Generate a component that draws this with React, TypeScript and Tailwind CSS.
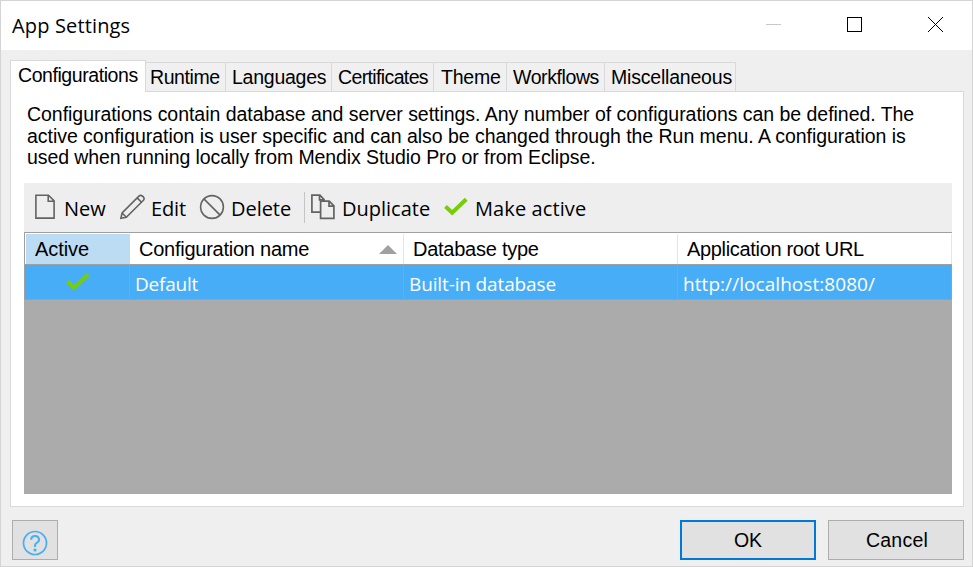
const ui = "font-['Open_Sans','Noto_Sans',sans-serif]";
const classic = "font-['Liberation_Sans',Arial,sans-serif]";

const tabs = [
  { label: "Runtime", cls: "w-[80px] pl-1 tracking-[-0.42px]" },
  { label: "Languages", cls: "w-[106px] pl-[6px] tracking-[-0.25px]" },
  { label: "Certificates", cls: "w-[102px] pl-[6px] tracking-[-0.63px]" },
  { label: "Theme", cls: "w-[73px] pl-[7px] tracking-[-0.2px]" },
  { label: "Workflows", cls: "w-[98px] pl-[6px] tracking-[-0.4px]" },
  { label: "Miscellaneous", cls: "w-[131px] pl-[6px] tracking-[-0.2px]" },
];

function Check() {
  return (
    <svg width="24" height="20" viewBox="0 0 24 20" fill="none">
      <path d="M1.5 9.5 8.2 15.8 22.2 2.2" stroke="#76ce06" strokeWidth="4" />
    </svg>
  );
}

function NewIcon() {
  return (
    <svg width="20" height="26" viewBox="0 0 20 26" fill="none" stroke="#636363" strokeWidth="1.6">
      <path d="M.9 1.3h12.6l5.6 5.6v17.2H.9zM13.2 1.3v5.9h5.9" />
    </svg>
  );
}

function EditIcon() {
  return (
    <svg width="26" height="26" viewBox="0 0 26 26" fill="none" stroke="#636363" strokeWidth="1.6">
      <path d="M.9 24.3 2.1 19 18.9 2.1Q20.7.5 22.5 2.1L23.3 2.9Q24.9 4.7 23.2 6.5L6.3 23.2zM2.1 19 6.3 23.2M17.2 3.9l4.3 4.3" />
    </svg>
  );
}

function DeleteIcon() {
  return (
    <svg width="26" height="26" viewBox="0 0 26 26" fill="none" stroke="#636363" strokeWidth="1.6">
      <circle cx="13" cy="13" r="11.4" />
      <path d="m4.9 4.9 16.2 16.2" />
    </svg>
  );
}

function DuplicateIcon() {
  return (
    <svg width="24" height="26" viewBox="0 0 24 26" fill="none" stroke="#636363" strokeWidth="1.7">
      <path d="M9.5 18.2H.9V1.2h8l4.2 4.4v1.3M8.5 1.2v4.7h4.6" />
      <path d="M9.6 7.2h8.6l4.7 4.7v12.5H9.6zM18 7.2v4.9h4.9" />
    </svg>
  );
}

function HelpIcon() {
  return (
    <svg width="26" height="26" viewBox="0 0 26 26" fill="none" stroke="#48adf7" strokeWidth="1.7">
      <circle cx="13" cy="13" r="11.5" />
      <path d="M9.2 9.7a3.9 3.6 0 1 1 5.6 3.1Q13 13.7 13 15.2V17" strokeWidth="2" />
      <circle cx="13" cy="20" r="1.6" fill="#48adf7" stroke="none" />
    </svg>
  );
}

function TitleBar() {
  return (
    <header className="flex h-[49px] shrink-0 items-start bg-white">
      <h1 className={`${ui} ml-[11px] mt-[11px] flex-1 text-[20px] leading-[28px] tracking-[0.15px]`}>App Settings</h1>
      <svg className="mt-[15px] mr-[27px]" width="180" height="17" viewBox="0 0 180 17" fill="none" shapeRendering="crispEdges">
        <path d="M1 8.5h15" stroke="#c8c8c8" />
        <path d="M82.5 1.5h14v14h-14z" stroke="#000" />
        <path d="m163 1 15 15M178 1l-15 15" stroke="#000" strokeWidth="1" shapeRendering="auto" />
      </svg>
    </header>
  );
}

function TabStrip() {
  return (
    <div className={`${classic} flex h-[31px] items-end text-[19.5px]`}>
      <div className="z-10 -mb-px h-[32px] w-[136px] shrink-0 border border-b-0 border-[#d9d9d9] bg-white pl-[7px] pt-[3px] leading-[22px] tracking-[-0.43px]">
        Configurations
      </div>
      {tabs.map((t) => (
        <div key={t.label} className={`${t.cls} h-[29px] shrink-0 border-r border-t border-[#d9d9d9] bg-[#f0f0f0] pt-[3px] leading-[22px]`}>
          {t.label}
        </div>
      ))}
    </div>
  );
}

function Toolbar() {
  return (
    <div className={`${ui} flex h-[49px] items-start bg-[#eee] text-[20px] leading-[28px]`}>
      <div className="flex w-[96px] pl-[11px] pt-[11px]">
        <NewIcon />
        <span className="ml-[9px] mt-px">New</span>
      </div>
      <div className="flex w-[79px] pt-[11px]">
        <EditIcon />
        <span className="ml-[5px] mt-px tracking-[-0.13px]">Edit</span>
      </div>
      <div className="flex w-[105px] pt-[11px]">
        <DeleteIcon />
        <span className="ml-[6px] mt-px tracking-[-0.05px]">Delete</span>
      </div>
      <div className="mt-[9px] h-[31px] w-px bg-[#c4c4c4]" />
      <div className="flex w-[139px] pl-[6px] pt-[11px]">
        <DuplicateIcon />
        <span className="ml-[7px] mt-px">Duplicate</span>
      </div>
      <div className="flex pt-[11px]">
        <div className="pt-[3px]"><Check /></div>
        <span className="ml-[7px] mt-px tracking-[0.1px]">Make active</span>
      </div>
    </div>
  );
}

function Grid() {
  return (
    <div className="flex h-[262px] flex-col border-t border-[#a0a0a0] bg-[#ababab]">
      <div className={`${classic} flex h-[32px] border-b border-l border-[#a0a0a0] bg-white pt-px text-[20px] leading-[30px]`}>
        <div className="ml-px w-[104px] bg-[#bcdcf4] pl-[9px] tracking-[-0.07px]">Active</div>
        <div className="flex w-[274px] border-r border-[#e5e5e5] pl-[9px] tracking-[-0.25px]">
          <span className="flex-1">Configuration name</span>
          <svg className="mr-[6px] mt-[11px]" width="18" height="9" viewBox="0 0 18 9">
            <path d="M0 9 9 0l9 9z" fill="#a0a0a0" />
          </svg>
        </div>
        <div className="w-[274px] border-r border-[#e5e5e5] pl-[9px] tracking-[-0.25px]">Database type</div>
        <div className="flex-1 border-r border-[#e5e5e5] pl-[9px] tracking-[-0.33px]">Application root URL</div>
      </div>
      <div className={`${ui} flex h-[35px] border-b border-l border-[#a0a0a0] bg-[#48adf7] text-[19px] leading-[38px] text-white`}>
        <div className="flex w-[105px] border-r border-[#7ba7c9] pl-[41px] pt-[7px]"><Check /></div>
        <div className="w-[274px] border-r border-[#7ba7c9] pl-[5px] tracking-[-0.22px]">Default</div>
        <div className="w-[274px] border-r border-[#7ba7c9] pl-[5px] tracking-[-0.13px]">Built-in database</div>
        <div className="flex-1 border-r border-[#7ba7c9] pl-[5px] tracking-[0.06px]">http://localhost:8080/</div>
      </div>
    </div>
  );
}

export default function App() {
  return (
    <div className="flex h-[567px] w-[973px] flex-col overflow-hidden whitespace-nowrap border border-[#d4d4d4] bg-[#efefef] text-black">
      <TitleBar />
      <main className="ml-[9px] mr-[8px] mt-[10px]">
        <TabStrip />
        <section className="h-[416px] border border-[#d9d9d9] bg-white px-[13px]">
          <p className={`${classic} h-[91px] pl-[3px] pt-[12px] text-[19.5px] leading-[21.5px] tracking-[-0.035px]`}>
            Configurations contain database and server settings. Any number of configurations can be defined. The
            <br />
            active configuration is user specific and can also be changed through the Run menu. A configuration is
            <br />
            <span className="tracking-[-0.09px]">used when running locally from Mendix Studio Pro or from Eclipse.</span>
          </p>
          <div className="w-[928px]">
            <Toolbar />
            <Grid />
          </div>
        </section>
      </main>
      <footer className={`${classic} ml-[11px] mr-[8px] mt-[13px] flex h-[40px] gap-3 text-[19.5px] leading-[22px]`}>
        <button className="mr-auto flex w-[46px] border border-[#adadad] bg-[#e1e1e1] pl-[9px] pt-[9px]"><HelpIcon /></button>
        <button className="w-[136px] border-2 border-[#0078d7] bg-[#e1e1e1]">OK</button>
        <button className="w-[136px] border border-[#adadad] bg-[#e1e1e1] pl-[2px] tracking-[0.25px]">Cancel</button>
      </footer>
    </div>
  );
}
